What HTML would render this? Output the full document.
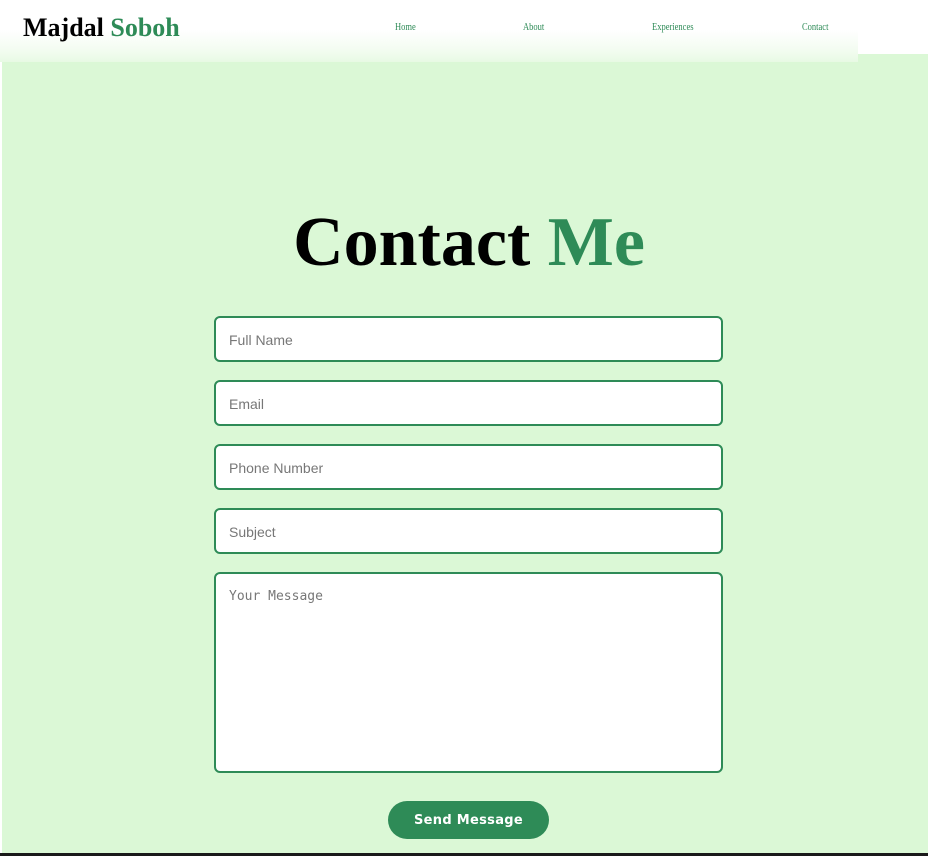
<!DOCTYPE html>
<html><head><style>
*{margin:0;padding:0;box-sizing:border-box}
body{width:928px;height:856px;background:#fff;position:relative;overflow:hidden;font-family:"Liberation Sans",sans-serif}
.bg{position:absolute;left:2px;top:54px;width:926px;height:799px;background:#dbf8d6}
.bot{position:absolute;left:0;top:853px;width:928px;height:3px;background:#1a1a1a}
.hdr{position:absolute;left:0;top:0;width:858px;height:62px;background:linear-gradient(#fff 0,#fff 30px,#f3fcf1 50px,#e8fae4 62px)}
.logo{position:absolute;left:23px;top:13px;font:bold 26px "Liberation Serif",serif;color:#000}
.logo span,.nav a{color:#2e8b57}
.nav a{position:absolute;top:22px;font:10px "Liberation Serif",serif;text-decoration:none;transform:scaleX(.85);transform-origin:left}
h1{position:absolute;left:0;width:938px;text-align:center;top:203px;font:bold 70px "Liberation Serif",serif;color:#000}
h1 span{color:#2e8b57}
.f{position:absolute;left:214px;width:509px;height:46px;background:#fff;border:2px solid #2e8b57;border-radius:6px;padding:14px 13px 0;font-size:14px;color:#777}
.ta{font:13px "DejaVu Sans Mono","Liberation Mono",monospace;padding:15px 13px 0;height:201px}
.btn{position:absolute;left:388px;top:801px;width:161px;height:38px;border-radius:19px;background:#2e8b57;color:#fff;font:bold 13px "DejaVu Sans",sans-serif;text-align:center;line-height:39px;letter-spacing:.3px}
</style></head><body>
<div class="bg"></div><div class="bot"></div>
<div class="hdr"></div>
<div class="logo">Majdal <span>Soboh</span></div>
<div class="nav"><a style="left:395px">Home</a><a style="left:523px">About</a><a style="left:652px">Experiences</a><a style="left:802px">Contact</a></div>
<h1>Contact <span>Me</span></h1>
<div class="f" style="top:316px">Full Name</div>
<div class="f" style="top:380px">Email</div>
<div class="f" style="top:444px">Phone Number</div>
<div class="f" style="top:508px">Subject</div>
<div class="f ta" style="top:572px">Your Message</div>
<div class="btn">Send Message</div>
</body></html>
